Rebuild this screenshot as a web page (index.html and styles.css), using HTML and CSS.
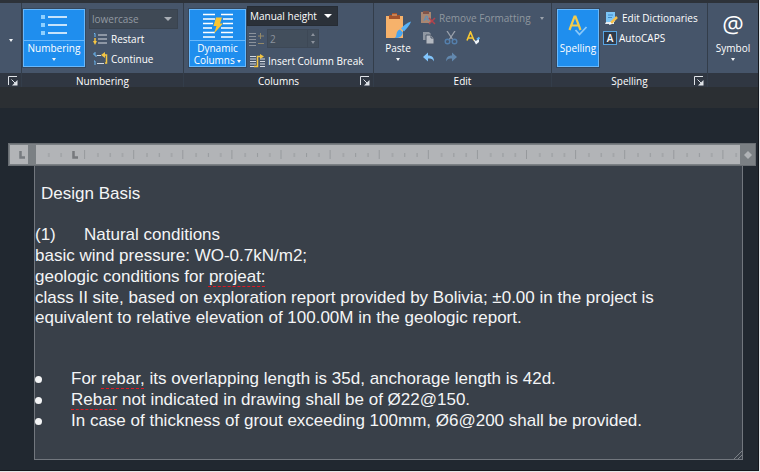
FILE: index.html
```
<!DOCTYPE html>
<html lang="en">
<head>
  <meta charset="UTF-8">
  <title>Text Editor</title>
  <link rel="stylesheet" href="styles.css">
</head>
<body>

<div class="app">
  <header class="ribbon">
    <section class="panel">
      <div class="tools center">
        <button class="more" aria-label="More"><i class="arrow"></i></button>
      </div>
      <div class="panel-title">
        <button class="launcher" aria-label="Text options">
          <svg width="10" height="10" viewBox="0 0 10 10"><path d="M.5 9V.5H9M3.5 3.5l4 4" fill="none" stroke="#dfe3e8"/><path d="M9.5 4v5.500H4z" fill="#dfe3e8"/></svg>
        </button>
      </div>
    </section>

    <section class="panel">
      <div class="tools">
        <button class="big split numbering">
          <span class="big-icon">
            <svg width="28" height="22" viewBox="0 0 28 22"><path d="M1 1h4v4H1zM1 9h4v4H1zM1 17h4v4H1z" fill="#8ed0ff"/><path d="M8 3h19M8 11h19M8 19h19" stroke="#fff" stroke-width="1.500"/></svg>
          </span>
          <span>Numbering</span>
          <i class="arrow"></i>
        </button>
        <div class="stack">
          <div class="drop disabled">
            <select aria-label="List style" disabled><option>lowercase</option></select>
          </div>
          <button class="row">
            <svg width="15" height="14" viewBox="0 0 15 14"><path d="M5 3h9M5 7h9M5 11h9" stroke="#d5dae0"/><path d="M1 1.500h1V5" fill="none" stroke="#6bb8f2"/><path d="M2 6v5" stroke="#f4c542" stroke-width="1.500"/><path d="M0 9h4l-2 4z" fill="#f4c542"/></svg>
            Restart
          </button>
          <button class="row">
            <svg width="15" height="14" viewBox="0 0 15 14"><path d="M4 3.500h4M4 11.500h7" stroke="#d5dae0"/><path d="M3 1H1v2h2v2M1 9h1v4" fill="none" stroke="#6bb8f2"/><path d="M10 3h3.500v8H12" fill="none" stroke="#f4c542" stroke-width="1.500"/><path d="M12 0v6L8 3z" fill="#f4c542"/></svg>
            Continue
          </button>
        </div>
      </div>
      <h2 class="panel-title">Numbering</h2>
    </section>

    <section class="panel">
      <div class="tools">
        <button class="big split columns">
          <span class="big-icon">
            <svg width="30" height="25" viewBox="0 0 30 25"><path d="M0 1.500h12M0 6h12M0 10.500h10M0 15h9M0 19.500h12M0 24h12M18 1.500h12M20 6h10M20 10.500h10M18 15h12M18 19.500h12M18 24h12" stroke="#fff" stroke-width="1.500"/><path d="M13 4.500h6l-2 6h3l-9 10 2.500-7.500h-3z" fill="#fbc531"/></svg>
          </span>
          <span>Dynamic<br>Columns <i class="arrow"></i></span>
        </button>
        <div class="stack wide">
          <div class="drop dark">
            <select aria-label="Column height"><option>Manual height</option></select>
          </div>
          <div class="count">
            <svg width="15" height="14" viewBox="0 0 15 14"><path d="M0 1.500h7M0 4.500h7M0 7.500h7M0 10.500h7M0 13.500h7" stroke="#8b929c"/><path d="M11.500 1v6M9 4h6M9 11.500h6" stroke="#948968"/></svg>
            <span class="spinner">
              <input type="number" aria-label="Column count" value="2" disabled>
              <span class="spin"><i class="arrow up"></i><i class="arrow"></i></span>
            </span>
          </div>
          <button class="row">
            <svg width="15" height="14" viewBox="0 0 15 14"><path d="M0 2.500h6M0 5h6M0 7.500h6M0 10h6M0 12.500h5M10 5h5M10 7.500h5M10 10h5M10 12.500h5" stroke="#d5dae0"/><path d="M4 12.500h3.500v-10H11" fill="none" stroke="#f4c542" stroke-width="1.500"/><path d="M10 0l4 2.500L10 5z" fill="#f4c542"/></svg>
            Insert Column Break
          </button>
        </div>
      </div>
      <h2 class="panel-title">Columns
        <button class="launcher" aria-label="Column settings">
          <svg width="10" height="10" viewBox="0 0 10 10"><path d="M.5 9V.5H9M3.500 3.500l4 4" fill="none" stroke="#dfe3e8"/><path d="M9.500 4v5.500H4z" fill="#dfe3e8"/></svg>
        </button>
      </h2>
    </section>

    <section class="panel">
      <div class="tools">
        <button class="big flat paste">
          <span class="big-icon">
            <svg width="26" height="26" viewBox="0 0 26 26"><path d="M1 3h17v22H1z" fill="#f6b26b"/><path d="M4 2h3V0h5v2h3v4H4z" fill="#a3532c"/><path d="M7 2h5" stroke="#f0b078"/><path d="M26 8.500c-3 1-7 3.500-10 7l3 3c3-3 6-7 7-10z" fill="#58b4fa"/><path d="M15 16.500l3 3c-1 4-4 6-8.500 5.500 2-1 1.500-2 2-4 .5-2.500 1.500-4 3.500-4.500z" fill="#46a4f0"/></svg>
          </span>
          <span>Paste</span>
          <i class="arrow"></i>
        </button>
        <div class="stack edit">
          <button class="row" disabled>
            <svg width="15" height="14" viewBox="0 0 15 14"><path d="M0 1h10v11H0z" fill="#a88672"/><path d="M2 0h6v3H2z" fill="#80554a"/><path d="M3 10l2-5h1l2 5M4 8h3" fill="none" stroke="#5990bd"/><path d="M8 7l6 6M14 7l-6 6" stroke="#b3434c" stroke-width="1.500"/></svg>
            Remove Formatting
            <i class="arrow"></i>
          </button>
          <div class="icons">
            <button aria-label="Copy" disabled><svg width="14" height="14" viewBox="0 0 14 14"><path d="M1 1h6l2 2v6H1z" fill="#8f97a2"/><path d="M4 4h5l3 3v6H4z" fill="#b3b8c0" stroke="#4a5668"/><path d="M9 4v3h3" fill="none" stroke="#4a5668"/></svg></button>
            <button aria-label="Cut" disabled><svg width="14" height="14" viewBox="0 0 14 14"><path d="M3 0l6 9M11 0L5 9" stroke="#9aa1ac" stroke-width="1.300"/><circle cx="3.500" cy="10.500" r="2.300" fill="none" stroke="#547fac" stroke-width="1.400"/><circle cx="10.500" cy="10.500" r="2.300" fill="none" stroke="#547fac" stroke-width="1.400"/></svg></button>
            <button aria-label="Match formatting"><svg width="14" height="14" viewBox="0 0 14 14"><path d="M1 9.500L4.500 1 8 9.500M2.200 7h4.600" fill="none" stroke="#f7c832" stroke-width="1.600"/><path d="M7 8l3 2 3-3v4l-3 2.500z" fill="#eef3f8"/><path d="M11 8.500l2.500-2" stroke="#58b4fa" stroke-width="2"/></svg></button>
          </div>
          <div class="icons">
            <button aria-label="Undo"><svg width="14" height="14" viewBox="0 0 14 14"><path d="M1 6l5-4.500v3c4 0 6 2 6 6-1-2.500-3-3-6-3v3z" fill="#82c5fb"/></svg></button>
            <button aria-label="Redo" disabled><svg width="14" height="14" viewBox="0 0 14 14"><path d="M13 6L8 1.500v3c-4 0-6 2-6 6 1-2.500 3-3 6-3v3z" fill="#6288ae"/></svg></button>
          </div>
        </div>
      </div>
      <h2 class="panel-title">Edit</h2>
    </section>

    <section class="panel">
      <div class="tools">
        <button class="big spelling" aria-pressed="true">
          <span class="big-icon">
            <svg width="20" height="22" viewBox="0 0 20 22"><path d="M1.500 15L6.500 1.500h1L12.500 15M3.500 10.500h7" fill="none" stroke="#f3cc4c" stroke-width="2.200"/><path d="M7.500 15l4 4.500 7-7.500" fill="none" stroke="#8ac8fa" stroke-width="1.800"/></svg>
          </span>
          <span>Spelling</span>
        </button>
        <div class="stack dict">
          <button class="row">
            <svg width="15" height="14" viewBox="0 0 15 14"><path d="M2 1h9v10H2z" fill="#7cc5f7"/><path d="M2 11h8v2H1z" fill="#e6ebf0"/><path d="M4 4h5M4 6.500h4" stroke="#3e88c7"/><path d="M7 12l6-6" stroke="#f7c04a" stroke-width="2.500"/><path d="M5 14l1-3 2 2z" fill="#fff"/></svg>
            Edit Dictionaries
          </button>
          <button class="row caps" aria-pressed="true"><span class="a-box">A</span>AutoCAPS</button>
        </div>
      </div>
      <h2 class="panel-title">Spelling
        <button class="launcher" aria-label="Spelling settings">
          <svg width="10" height="10" viewBox="0 0 10 10"><path d="M.5 9V.5H9M3.500 3.500l4 4" fill="none" stroke="#dfe3e8"/><path d="M9.500 4v5.500H4z" fill="#dfe3e8"/></svg>
        </button>
      </h2>
    </section>

    <section class="panel">
      <div class="tools center">
        <button class="big flat">
          <span class="big-icon at">@</span>
          <span>Symbol</span>
          <i class="arrow"></i>
        </button>
      </div>
      <div class="panel-title"></div>
    </section>
  </header>

  <div class="tab-bar"></div>

  <main class="canvas">
    <div class="ruler">
      <button class="tab-type" aria-label="Tab type"><svg width="6" height="8" viewBox="0 0 6 8"><path d="M1.500 0v6.500H6" fill="none" stroke="#777b80" stroke-width="2.500"/></svg></button>
      <svg class="scale" height="19">
        <defs>
          <pattern id="ticks" width="49.100" height="19" patternUnits="userSpaceOnUse">
            <path d="M12.800 8v4M25.100 8v4M37.400 8v4M48.600 5v9" stroke="#96999c"/>
          </pattern>
        </defs>
        <rect width="100%" height="19" fill="url(#ticks)"/>
        <path d="M37.500 6v6.500H42" fill="none" stroke="#77797d" stroke-width="2.500"/>
      </svg>
      <svg class="grip" width="8" height="8" viewBox="0 0 8 8"><path d="M4 0l4 4-4 4-4-4z" fill="#b0b3b6"/></svg>
    </div>

    <article class="document">
      <h1>Design Basis</h1>
      <div class="conditions">
        <p class="numbered"><span>(1)</span>Natural conditions</p>
        <p>basic wind pressure: WO-0.7kN/m2;</p>
        <p>geologic conditions for <span class="typo">projeat:</span></p>
        <p>class II site, based on exploration report provided by Bolivia; ±0.00 in the project is equivalent to relative elevation of 100.00M in the geologic report.</p>
      </div>
      <ul>
        <li>For <span class="typo">rebar,</span> its overlapping length is 35d, anchorage length is 42d.</li>
        <li><span class="typo">Rebar</span> not indicated in drawing shall be of Ø22@150.</li>
        <li>In case of thickness of grout exceeding 100mm, Ø6@200 shall be provided.</li>
      </ul>
      <svg class="resize" width="8" height="8" viewBox="0 0 8 8"><path d="M0 8l8-8M4 8l4-4" stroke="#7d8288"/></svg>
    </article>
  </main>
</div>

</body>
</html>
```
FILE: styles.css
```
* {
  box-sizing: border-box;
  margin: 0;
  padding: 0;
}

body {
  background: #e4e5e7;
  padding: 0 1px 1px 0;
}

.app {
  background: #212830;
  border-right: 1px solid #15181e;
  border-bottom: 1px solid #15181e;
  color: #fff;
  font: 10px/14px "Open Sans", "Noto Sans", sans-serif;
}

button,
input,
select {
  font: inherit;
  color: inherit;
  background: none;
  border: 0;
}

svg {
  display: block;
  flex: none;
}

/* Ribbon */
.ribbon {
  display: grid;
  grid-template-columns: 22px 162px 190px 178px 156px 1fr;
  border-top: 3px solid #2d3239;
}

.panel {
  display: flex;
  flex-direction: column;
  background: #46556a;
  border-right: 1px solid #333d4a;
}

.panel:last-child {
  border-right: 0;
}

.tools {
  display: flex;
  height: 70px;
}

.tools.center {
  justify-content: center;
}

.panel-title {
  display: flex;
  position: relative;
  align-items: center;
  justify-content: center;
  height: 14px;
  padding-top: 2px;
  background: #303742;
  font-size: 10px;
  font-weight: normal;
}

.launcher {
  position: absolute;
  right: 3px;
  top: 3px;
}

.arrow {
  display: inline-block;
  border: 2px solid transparent;
  border-top: 3px solid #f2f4f6;
  border-bottom: 0;
}

.arrow.up {
  border-top: 0;
  border-bottom: 3px solid #8b929c;
}

.more {
  width: 20px;
}

.big {
  display: flex;
  flex-direction: column;
  align-items: center;
  height: 58px;
  margin-top: 6px;
  background: #1f8eee;
  border: 1px solid #69b8fb;
  outline: 1px solid #35475d;
  white-space: nowrap;
}

.big-icon {
  display: flex;
  align-items: center;
  justify-content: center;
  width: 100%;
  height: 31px;
}

.split .big-icon {
  border-bottom: 1px solid #69b8fb;
}

.flat {
  background: none;
  border-color: transparent;
  outline: 0;
}

.numbering {
  width: 62px;
  margin-left: 1px;
}

.big > .arrow {
  margin-top: 3px;
}

.columns {
  width: 57px;
  margin-left: 5px;
  line-height: 12px;
}

.columns .big-icon {
  flex: none;
  margin-bottom: 1px;
}

.columns .arrow {
  vertical-align: middle;
}

.paste {
  width: 40px;
  margin-left: 4px;
}

.spelling {
  width: 42px;
  margin-left: 5px;
}

.at {
  height: 31px;
  padding-bottom: 4px;
  font-size: 24px;
}

.stack {
  display: flex;
  flex-direction: column;
  margin: 6px 0 0 4px;
}

.row {
  display: flex;
  align-items: center;
  gap: 3px;
  height: 20px;
  padding-left: 4px;
  white-space: nowrap;
}

.row:disabled {
  color: #8f979f;
}

.row .arrow {
  margin-left: 6px;
}

.row:disabled .arrow {
  border-top-color: #9aa1ab;
}

.drop {
  display: flex;
  position: relative;
  width: 89px;
  height: 20px;
  background: #3f4955;
  border: 1px solid #39434f;
}

.drop select {
  appearance: none;
  width: 100%;
  padding-left: 2px;
  opacity: 1;
}

.drop::after {
  content: "";
  position: absolute;
  right: 5px;
  top: 7px;
  border: 4px solid transparent;
  border-top: 4px solid #fff;
  border-bottom: 0;
  pointer-events: none;
}

.disabled {
  color: #9299a2;
}

.disabled::after {
  border-top-color: #a8adb4;
}

.dark {
  width: 91px;
  background: #2b3139;
  border-color: #262c34;
}

.wide {
  margin: 3px 0 0 1px;
  gap: 3px;
}

.wide .row {
  padding-left: 3px;
}

.count {
  display: flex;
  align-items: center;
  gap: 3px;
  padding-left: 2px;
  color: #8b929c;
}

.spinner {
  display: flex;
  width: 52px;
  height: 19px;
  border: 1px solid #3d4856;
  background: #424e5c;
}

.spinner input {
  width: 39px;
  padding-left: 2px;
  appearance: textfield;
}

.spin {
  display: flex;
  flex: 1;
  flex-direction: column;
  align-items: center;
  justify-content: space-around;
  border-left: 1px solid #3d4856;
}

.spin .arrow {
  border-top-color: #8b929c;
}

.edit {
  margin: 5px 0 0;
}

.edit .row {
  padding-left: 3px;
}

.icons {
  display: flex;
  align-items: center;
  gap: 8px;
  height: 20px;
  padding-left: 4px;
}

.dict {
  margin-top: 5px;
  margin-left: 3px;
}

.dict .row {
  padding-left: 2px;
}

.dict .caps {
  gap: 2px;
  padding-left: 1px;
}

.a-box {
  width: 14px;
  height: 14px;
  border: 1px solid #58a5e3;
  background: #303b4a;
  font-weight: 600;
  line-height: 12px;
}

.tab-bar {
  height: 21px;
  background: #2b2f33;
}

/* Drawing area with the text editor */
.canvas {
  padding: 35px 2px 10px 8px;
}

.ruler {
  display: flex;
  align-items: center;
  height: 23px;
  background: #7b8084;
  border: 1px solid #696e73;
}

.tab-type {
  display: flex;
  align-items: center;
  justify-content: flex-end;
  width: 18px;
  height: 19px;
  margin: 0 8px 0 1px;
  padding-right: 3px;
  background: #b2b4b7;
}

.scale {
  flex: 1;
  width: 0;
  background: #b2b4b7;
}

.grip {
  margin: 0 3px 0 4px;
}

.document {
  position: relative;
  margin: 0 13px 0 26px;
  padding: 18px 0 28px;
  background: #394049;
  border: 1px solid #72777e;
  border-top: 0;
  font: 17px/20px "Liberation Sans", Arial, sans-serif;
  color: #f4f5f6;
}

.document h1 {
  padding-left: 6px;
  font-size: 17px;
  font-weight: normal;
}

.conditions {
  display: grid;
  gap: 1px;
  margin: 21px 0 41px;
}

.conditions p {
  padding-right: 60px;
}

.numbered {
  display: flex;
}

.numbered span {
  width: 49px;
}

.document ul {
  display: grid;
  gap: 1px;
  list-style: none;
}

.document li::before {
  content: "";
  display: inline-block;
  width: 7px;
  height: 7px;
  margin-right: 29px;
  border-radius: 50%;
  background: #f4f5f6;
  vertical-align: middle;
}

.typo {
  text-decoration: underline dashed #e01824 1px;
  text-underline-offset: 4px;
}

.resize {
  position: absolute;
  right: 0;
  bottom: 0;
}
```
